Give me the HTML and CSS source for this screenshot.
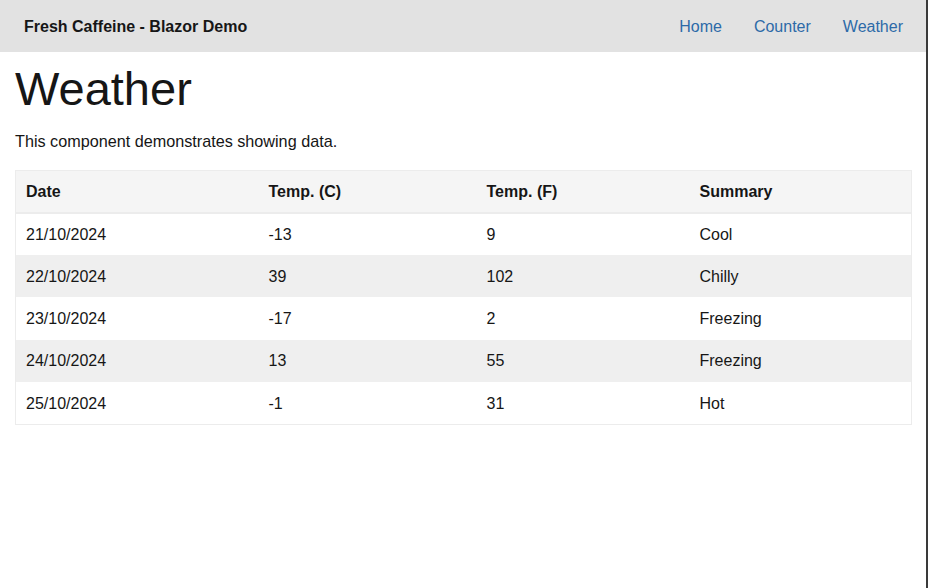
FILE: index.html
```html
<!DOCTYPE html>
<html lang="en">
<head>
<meta charset="utf-8">
<title>Weather</title>
<link rel="stylesheet" href="styles.css">
</head>
<body>
<div class="page">
  <nav class="navbar">
    <a class="brand" href="#">Fresh Caffeine - Blazor Demo</a>
    <ul class="nav-links">
      <li><a href="#">Home</a></li>
      <li><a href="#">Counter</a></li>
      <li><a href="#">Weather</a></li>
    </ul>
  </nav>
  <main class="content">
    <h1 class="title">Weather</h1>
    <p class="lead">This component demonstrates showing data.</p>
    <table class="data-table">
      <thead>
        <tr>
          <th class="col-date">Date</th>
          <th class="col-c">Temp. (C)</th>
          <th class="col-f">Temp. (F)</th>
          <th class="col-sum">Summary</th>
        </tr>
      </thead>
      <tbody>
        <tr><td>21/10/2024</td><td>-13</td><td>9</td><td>Cool</td></tr>
        <tr><td>22/10/2024</td><td>39</td><td>102</td><td>Chilly</td></tr>
        <tr><td>23/10/2024</td><td>-17</td><td>2</td><td>Freezing</td></tr>
        <tr><td>24/10/2024</td><td>13</td><td>55</td><td>Freezing</td></tr>
        <tr><td>25/10/2024</td><td>-1</td><td>31</td><td>Hot</td></tr>
      </tbody>
    </table>
  </main>
</div>
</body>
</html>
```
FILE: styles.css
```css
html, body {
  margin: 0;
  padding: 0;
  height: 100%;
  background: #ffffff;
}
body {
  font-family: "Liberation Sans", Arial, Helvetica, sans-serif;
  color: #161616;
}
.page {
  width: 926px;
  min-height: 588px;
  border-right: 2px solid #3a3a3a;
  box-sizing: content-box;
}
.navbar {
  height: 52px;
  background: #e2e2e2;
  display: flex;
  align-items: center;
  justify-content: space-between;
  padding: 0 23px 0 24px;
}
.brand {
  font-size: 16px;
  font-weight: bold;
  color: #161616;
  text-decoration: none;
  padding-top: 2px;
}
.nav-links {
  list-style: none;
  margin: 0;
  padding: 1px 0 0;
  display: flex;
  gap: 32px;
}
.nav-links a {
  font-size: 16px;
  color: #2d6aa8;
  text-decoration: none;
}
.content {
  padding: 0 14px 0 15px;
}
.title {
  font-size: 47px;
  font-weight: normal;
  margin: 9px 0 0;
  line-height: 56px;
}
.lead {
  font-size: 16.2px;
  margin: 14px 0 19px;
  line-height: 20px;
}
.data-table {
  width: 100%;
  border-collapse: collapse;
  border: 1px solid #ececec;
  font-size: 16px;
}
.data-table th,
.data-table td {
  text-align: left;
  padding: 1px 10px 0;
  height: 42.4px;
  box-sizing: border-box;
}
.data-table thead tr {
  background: #f5f5f5;
  border-bottom: 2px solid #ececec;
}
.data-table th {
  font-weight: bold;
  height: 42px;
}
.data-table tbody tr:nth-child(even) {
  background: #efefef;
}
.col-date { width: 243px; }
.col-c { width: 218px; }
.col-f { width: 213px; }
.col-sum { width: auto; }
```
